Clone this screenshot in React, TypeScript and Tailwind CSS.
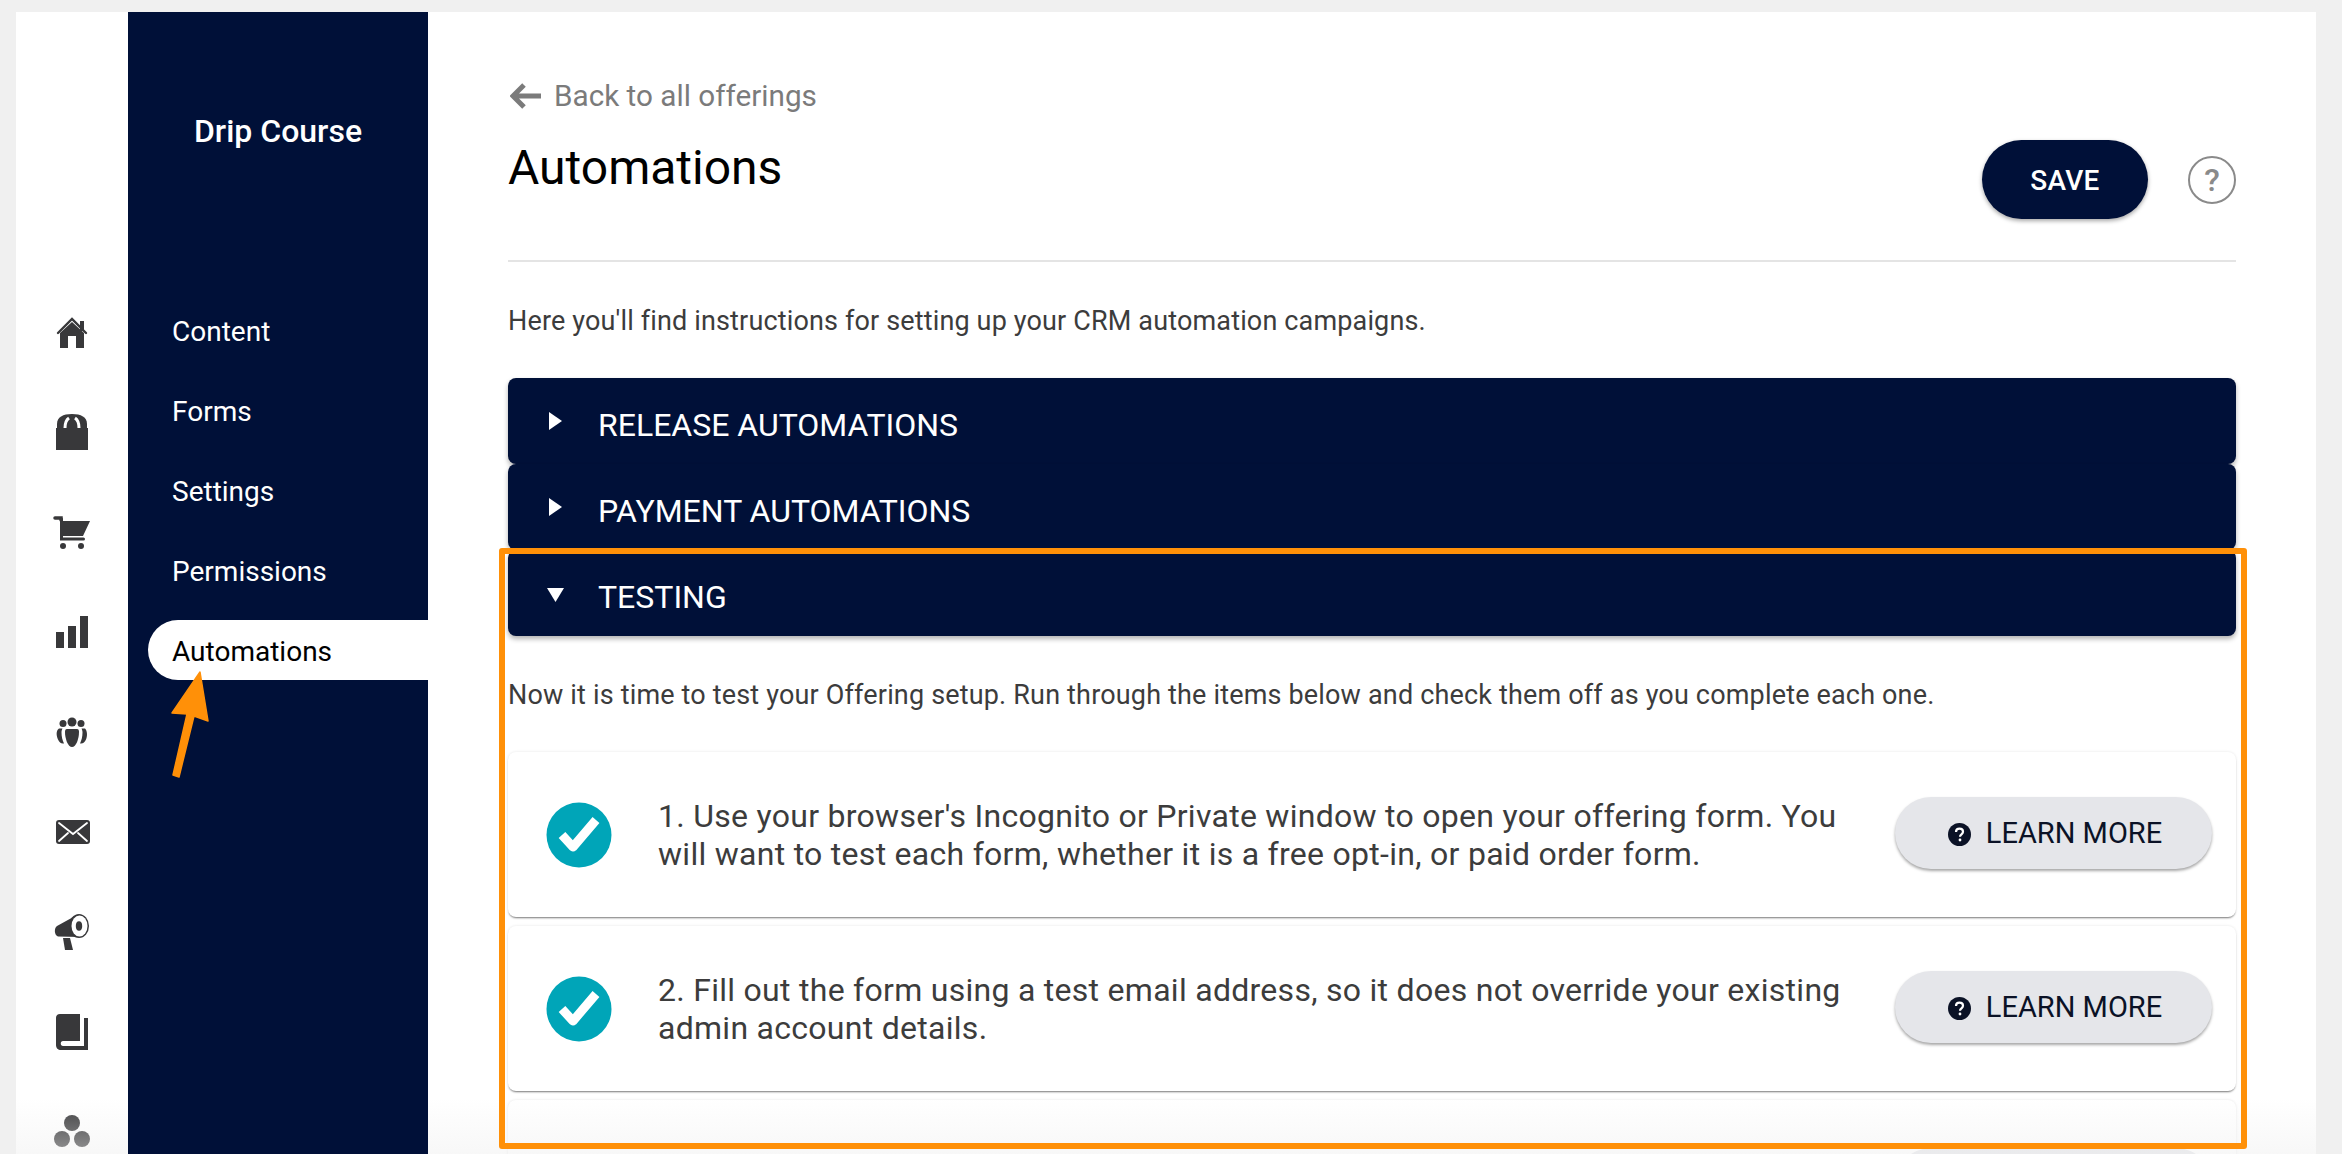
const NAVY = 'bg-[#001038]'

const navItems = ['Content', 'Forms', 'Settings', 'Permissions']

function RailIcon({ children }: { children: React.ReactNode }) {
  return (
    <div className="flex h-[100px] items-center justify-center">
      <svg width="40" height="40" viewBox="0 0 40 40" fill="#38383a">
        {children}
      </svg>
    </div>
  )
}

function Rail() {
  return (
    <div className="w-[112px] shrink-0 pt-[270px]">
      {/* home */}
      <RailIcon>
        <path d="M8 21 20 10 32 21V36H24V24H16V36H8Z" />
        <path d="M28 9h4v10h-4z" />
        <path d="M6 21 20 7 34 21" fill="none" stroke="#38383a" strokeWidth="2.4" strokeLinecap="round" />
      </RailIcon>
      {/* bag */}
      <RailIcon>
        <path d="M4 16h32v22H4z" />
        <path d="M5 16v-4C5 5 11 2 20 2s15 3 15 10v4z" />
        <path d="M13 16c0-5 1-8 4-10M27 16c0-5-1-8-4-10" fill="none" stroke="#fff" strokeWidth="3" />
      </RailIcon>
      {/* cart */}
      <RailIcon>
        <path d="M3 6h6v2" fill="none" stroke="#38383a" strokeWidth="3.500" strokeLinecap="round" />
        <path d="M11 9h27l-7 15H11z" />
        <path d="M9.500 7v20h22" fill="none" stroke="#38383a" strokeWidth="3" strokeLinecap="round" />
        <circle cx="11" cy="34" r="3" />
        <circle cx="29" cy="34" r="3" />
      </RailIcon>
      {/* bars */}
      <RailIcon>
        <path d="M4 20h8v16H4zM16 14h8v22h-8zM28 4h8v32h-8z" />
      </RailIcon>
      {/* people */}
      <RailIcon>
        <circle cx="20" cy="10" r="4.500" />
        <circle cx="11" cy="11.500" r="3.500" />
        <circle cx="29" cy="11.500" r="3.500" />
        <path d="M15 17h10c1.500 0 2 1 2 3 0 7-3 15-7 15s-7-8-7-15c0-2 .5-3 2-3z" />
        <path d="M7 16.500h3.500c-.5 1-1 2-1 4 0 4 1 8 2.500 11-3 .5-4.500-1-6-4S3.500 19 7 16.500z" />
        <path d="M33 16.500h-3.500c.5 1 1 2 1 4 0 4-1 8-2.500 11 3 .5 4.500-1 6-4s1.500-8.500-1-11z" />
      </RailIcon>
      {/* mail */}
      <RailIcon>
        <rect x="4" y="8" width="34" height="24" rx="3" />
        <path d="M7 11l14 11 14-11M7 29l9-8M35 29l-9-8" fill="none" stroke="#fff" strokeWidth="1.800" strokeLinecap="round" />
      </RailIcon>
      {/* megaphone */}
      <RailIcon>
        <path d="M11 26h7l3 12h-8z" />
        <path d="M5 14 24 3.500 28 25 6 24.500C2 23 2 16 5 14z" />
        <ellipse cx="27" cy="14" rx="10" ry="12" />
        <ellipse cx="27.500" cy="14" rx="8" ry="10.500" fill="#fff" />
        <ellipse cx="27" cy="14" rx="3.200" ry="4.800" />
      </RailIcon>
      {/* book */}
      <RailIcon>
        <path d="M8 2H28V29H11C8 29 8 34 11 34H32V6H36V38H9C6 38 4 36 4 33V6C4 3.500 5.500 2 8 2Z" />
      </RailIcon>
      {/* circles */}
      <RailIcon>
        <circle cx="20" cy="11" r="8" />
        <circle cx="10" cy="27" r="8" />
        <circle cx="30" cy="27" r="8" />
      </RailIcon>
    </div>
  )
}

function Sidebar() {
  return (
    <div className={`w-[300px] shrink-0 ${NAVY} text-white`}>
      <div className="flex h-[220px] flex-col items-center">
        <div className="mt-[99px] text-[32px] leading-[40px] font-medium">Drip Course</div>
        <div className="mt-[81px] h-2 w-[190px] bg-[#dfeac5]" />
      </div>
      <div className="mt-[58px] pl-5">
        {navItems.map((item) => (
          <div key={item} className="flex h-[80px] items-center pt-[3px] pl-6 text-[28px]">
            {item}
          </div>
        ))}
        <div className="mt-[10px] flex h-[60px] items-center rounded-l-[30px] bg-white pt-[3px] pl-6 text-[28px] text-black">
          Automations
        </div>
      </div>
    </div>
  )
}

function AccordionHead({ title, open }: { title: string; open?: boolean }) {
  return (
    <div className={`flex h-[86px] items-center rounded-lg ${NAVY} text-white shadow-[0_3px_5px_rgba(0,0,0,0.3)]`}>
      <div className="flex w-[90px] justify-end pr-[34px]">
        {open ? (
          <svg width="17" height="14" viewBox="0 0 17 14" fill="#fff" className="mt-[3px]">
            <path d="M0 0h17l-8.500 14z" />
          </svg>
        ) : (
          <svg width="13" height="18" viewBox="0 0 13 18" fill="#fff" className="mr-[2px] mb-[1px]">
            <path d="M0 0l13 9L0 18z" />
          </svg>
        )}
      </div>
      <div className="pt-[7px] text-[32px] leading-[40px]">{title}</div>
    </div>
  )
}

function LearnMore() {
  return (
    <button className="mb-[3px] flex h-[72px] w-[317px] shrink-0 items-center justify-center gap-[15px] rounded-full bg-[#e5e6ea] pt-[2px] pl-[3px] text-[29px] text-[#0b1226] shadow-[0_2px_3px_rgba(0,0,0,0.35)]">
      <svg width="23" height="23" viewBox="0 0 23 23">
        <circle cx="11.500" cy="11.500" r="11.500" fill="#0b1226" />
        <path d="M8 9c0-2 1.500-3.300 3.500-3.300S15 7 15 8.800c0 2.500-3 2.600-3 5" fill="none" stroke="#fff" strokeWidth="2.200" />
        <circle cx="12" cy="17" r="1.400" fill="#fff" />
      </svg>
      LEARN MORE
    </button>
  )
}

function StepCard({ lines }: { lines: string[] }) {
  return (
    <div className="flex h-[165px] items-center rounded-lg bg-white pr-6 pl-[38px] shadow-[0_2px_2px_-1px_rgba(0,0,0,0.5),0_0_3px_rgba(0,0,0,0.1)]">
      <svg width="66" height="66" viewBox="0 0 66 66" className="shrink-0">
        <circle cx="33" cy="33" r="32.500" fill="#00a5b8" />
        <path d="M16 33 27 45 50 18" fill="none" stroke="#fff" strokeWidth="9" strokeLinejoin="round" />
      </svg>
      <div className="ml-[46px] flex-1 text-[32px] leading-[38px] tracking-[0.28px] text-[#3c3c3c]">
        {lines.map((line) => (
          <div key={line}>{line}</div>
        ))}
      </div>
      <LearnMore />
    </div>
  )
}

export default function App() {
  return (
    <div className="relative h-screen overflow-hidden bg-[#f0f0f0] pt-3 pr-[26px] pl-4 font-['Roboto',sans-serif]">
      <div className="flex h-[1200px] bg-white">
        <Rail />
        <Sidebar />
        <main className="flex-1 px-20 pt-16">
          <div className="flex h-10 items-center text-[29.700px] text-[#7b7b7b]">
            <svg width="32" height="28" viewBox="0 0 32 28" className="mr-[12px] ml-[2px]">
              <path d="M14 3 3 14l11 11M3 14h28" fill="none" stroke="#7b7b7b" strokeWidth="5" />
            </svg>
            Back to all offerings
          </div>
          <div className="flex h-[146px] items-start justify-between border-b-2 border-[#e4e4e4]">
            <h1 className="pt-6 text-[48px] leading-[56px] text-black">Automations</h1>
            <div className="flex items-center gap-10 pt-6">
              <button className={`h-[79px] w-[166px] rounded-full ${NAVY} pt-[2px] text-[28px] font-medium tracking-[0.3px] text-white shadow-[0_2px_4px_rgba(0,0,0,0.35)]`}>
                SAVE
              </button>
              <div className="flex h-12 w-12 items-center justify-center rounded-full border-2 border-[#8a8a8a] text-[32px] font-medium text-[#8a8a8a]">
                ?
              </div>
            </div>
          </div>
          <p className="mt-[41px] text-[27px] leading-9 tracking-[0.15px] text-[#3c3c3c]">
            Here you'll find instructions for setting up your CRM automation campaigns.
          </p>
          <div className="mt-[39px]">
            <AccordionHead title="RELEASE AUTOMATIONS" />
            <AccordionHead title="PAYMENT AUTOMATIONS" />
            <AccordionHead title="TESTING" open />
          </div>
          <p className="mt-[41px] text-[27px] leading-9 tracking-[0.17px] text-[#3c3c3c]">
            Now it is time to test your Offering setup. Run through the items below and check them off as you complete each one.
          </p>
          <div className="mt-[39px] flex flex-col gap-[9px]">
            <StepCard
              lines={[
                "1. Use your browser's Incognito or Private window to open your offering form. You",
                'will want to test each form, whether it is a free opt-in, or paid order form.',
              ]}
            />
            <StepCard
              lines={[
                '2. Fill out the form using a test email address, so it does not override your existing',
                'admin account details.',
              ]}
            />
            {/* third card runs off the bottom of the screenshot */}
            <div className="flex h-[165px] justify-end rounded-lg bg-white pt-[48px] pr-6 shadow-[0_0_3px_rgba(0,0,0,0.1)]">
              <div className="h-[72px] w-[317px] rounded-full bg-[#e5e6ea]" />
            </div>
          </div>
        </main>
      </div>

      {/* bottom fade, the navy sidebar stays solid */}
      <div className="pointer-events-none absolute bottom-0 left-0 h-[56px] w-[128px] bg-gradient-to-b from-transparent to-[#f0f0f0]/50" />
      <div className="pointer-events-none absolute right-0 bottom-0 left-[428px] h-[56px] bg-gradient-to-b from-transparent to-[#f0f0f0]/50" />

      {/* annotation: highlight box */}
      <div className="pointer-events-none absolute top-[548px] left-[499px] h-[601px] w-[1748px] rounded-[3px] border-[6px] border-[#ff9008]" />

      {/* annotation: arrow */}
      <svg className="pointer-events-none absolute top-0 left-0" width="300" height="800">
        <path
          d="M200 672 208 721 194 716 179 777 173 775 187 714 172 713Z"
          fill="#ff9008"
          stroke="#ff9008"
          strokeWidth="1.500"
          strokeLinejoin="round"
        />
      </svg>
    </div>
  )
}
